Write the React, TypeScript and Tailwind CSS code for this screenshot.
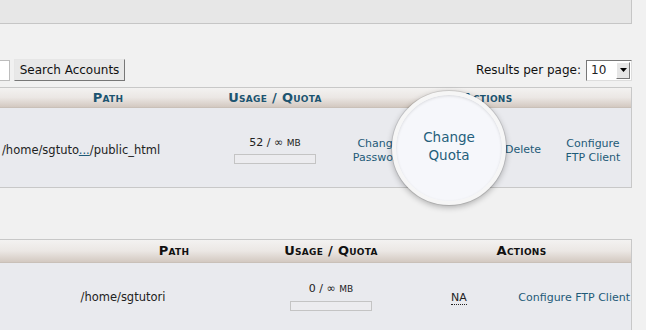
import React from "react";

const font = { fontFamily: '"DejaVu Sans", Verdana, sans-serif' };

function Bar() {
  return <div className="mx-auto mt-[3px] h-[10px] w-[82px] border border-[#c4c4c4] bg-[#ececef]"></div>;
}

function HeadCell({ children, className }: { children: React.ReactNode; className: string }) {
  return (
    <div className={`text-center text-[13px] font-bold [font-variant:small-caps] tracking-[0.3px] ${className}`}>
      {children}
    </div>
  );
}

export default function App() {
  return (
    <div className="relative h-[330px] w-[646px] overflow-hidden bg-[#f1f1f1] text-[11px] text-[#222]" style={font}>
      {/* top panel */}
      <div className="h-[24px] w-[632px] border-r border-b border-[#c6c6c6] bg-[#e7e7e7]"></div>

      {/* search row */}
      <div className="mt-[35px] flex h-[22px] w-[632px] items-center">
        <div className="h-[21px] w-[10px] border border-l-0 border-[#bdbdbd] bg-white"></div>
        <button className="ml-[4px] h-[22px] w-[111px] border border-t-[#e6e6e6] border-l-[#e6e6e6] border-r-[#777] border-b-[#777] bg-[#e8e8e8] text-[12px] text-[#111]">
          Search Accounts
        </button>
        <div className="ml-auto flex items-center">
          <span className="text-[12px] text-[#111]">Results per page:</span>
          <div className="ml-[5px] flex h-[21px] w-[46px] items-center border border-t-[#777] border-l-[#777] border-r-[#ddd] border-b-[#ddd] bg-white">
            <span className="ml-[4px] text-[12px]">10</span>
            <div className="ml-auto mr-[1px] flex h-[17px] w-[14px] items-center justify-center border border-t-[#fff] border-l-[#fff] border-r-[#777] border-b-[#777] bg-[#e6e6e6]">
              <svg width="7" height="4" viewBox="0 0 7 4"><path d="M0 0h7L3.5 4z" fill="#000" /></svg>
            </div>
          </div>
        </div>
      </div>

      {/* table 1 */}
      <div className="mt-[6px] w-[632px] border-t border-r border-[#c8c8c8]">
        <div className="flex h-[20px] items-center border-b border-[#c9c0b8] bg-gradient-to-b from-[#f3f2f1] via-[#ebe7e4] to-[#d3c9c1] text-[#1c5470]">
          <HeadCell className="w-[216px]">Path</HeadCell>
          <HeadCell className="w-[118px]">Usage / Quota</HeadCell>
          <HeadCell className="w-[297px] pl-[10px]">Actions</HeadCell>
        </div>
        <div className="flex h-[80px] items-center border-b border-[#c8c8c8] bg-[#e9eaee] pt-[6px]">
          <div className="w-[216px] pl-[2px] text-[11.5px]">
            /home/sgtuto<span className="text-[#1e5a78] underline">...</span>/public_html
          </div>
          <div className="w-[118px] pb-[2px] text-center">
            52 / ∞ <span className="text-[9px]">MB</span>
            <Bar />
          </div>
          <div className="w-[77px] pl-[12px] text-center leading-[14px] text-[#1e5a78]">
            Change
            <br />
            Password
          </div>
          <div className="w-[78px]"></div>
          <div className="w-[66px] pl-[2px] text-center text-[#1e5a78]">Delete</div>
          <div className="w-[76px] text-center leading-[14px] text-[#1e5a78]">
            Configure
            <br />
            FTP Client
          </div>
        </div>
      </div>

      {/* table 2 */}
      <div className="mt-[51px] w-[632px] border-t border-r border-[#c8c8c8]">
        <div className="flex h-[23px] items-center border-b border-[#c9c0b8] bg-gradient-to-b from-[#f3f2f1] via-[#ebe7e4] to-[#d3c9c1] text-[#111]">
          <HeadCell className="w-[254px] pl-[94px]">Path</HeadCell>
          <HeadCell className="w-[154px]">Usage / Quota</HeadCell>
          <HeadCell className="w-[223px] pl-[4px]">Actions</HeadCell>
        </div>
        <div className="flex h-[70px] items-center bg-[#e9eaee]">
          <div className="w-[246px] text-center text-[11.5px]">/home/sgtutori</div>
          <div className="w-[170px] pt-[2px] pb-[6px] text-center">
            0 / ∞ <span className="text-[9px]">MB</span>
            <Bar />
          </div>
          <div className="w-[86px] text-center">
            <span className="border-b border-dotted border-[#222]">NA</span>
          </div>
          <div className="flex-1 pr-[1px] text-right text-[#1e5a78]">Configure FTP Client</div>
        </div>
      </div>

      {/* magnifier */}
      <div className="absolute top-[91px] left-[392px] flex h-[114px] w-[114px] items-center justify-center rounded-full border-[4px] border-[#f6f6f6] bg-[#f6f7fb] shadow-[0_0_0_1px_rgba(0,0,0,0.1),0_2px_6px_rgba(0,0,0,0.3),inset_0_1px_3px_rgba(0,0,0,0.12)]">
        <div className="pb-[4px] text-center text-[13.5px] leading-[18px] text-[#255f7c]">
          Change
          <br />
          Quota
        </div>
      </div>
    </div>
  );
}
